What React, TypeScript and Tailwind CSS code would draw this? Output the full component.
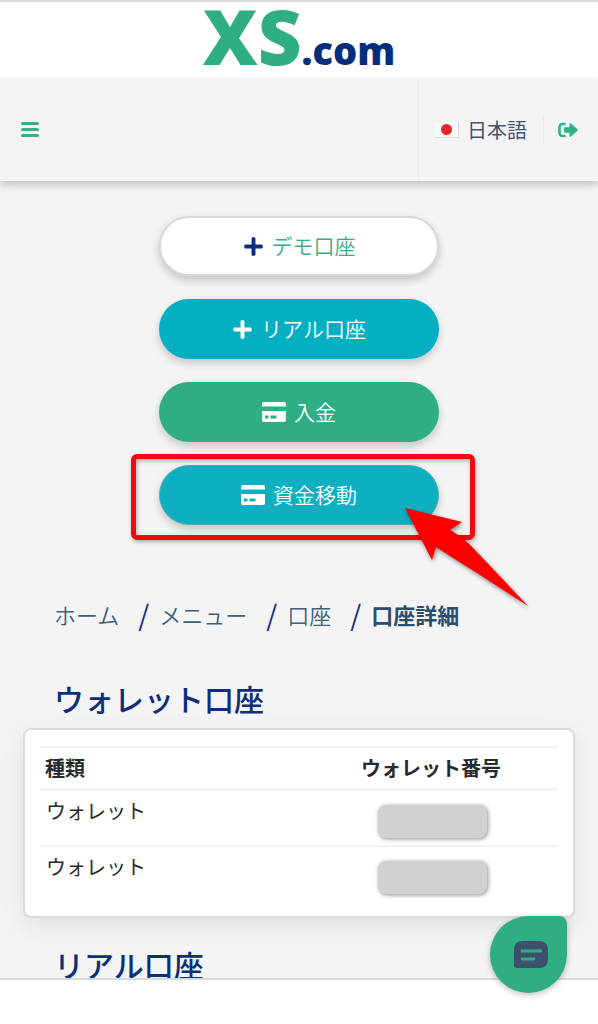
import type { ReactNode } from "react";
import { FaPlus } from "react-icons/fa";

const breadcrumbs = ["ホーム", "メニュー", "口座"];

const wallets = [
  { id: 1, type: "ウォレット" },
  { id: 2, type: "ウォレット" },
];

function CardIcon() {
  return (
    <svg viewBox="0 0 24 20" className="h-5 w-6" fill="currentColor" aria-hidden="true">
      <path d="M2 0H22A2 2 0 0 1 24 2V4.500H0V2A2 2 0 0 1 2 0Z" />
      <path
        fillRule="evenodd"
        d="M0 9H24V18A2 2 0 0 1 22 20H2A2 2 0 0 1 0 18ZM3 13.500V16.500H6.500V13.500ZM8.500 13.500V16.500H14.500V13.500Z"
      />
    </svg>
  );
}

function LogoutIcon() {
  return (
    <svg viewBox="0 0 20 16" className="h-4 w-5 text-[#2bb38a]" aria-hidden="true">
      <path
        d="M7.500 2H4.500A3 3 0 0 0 1.500 5V11A3 3 0 0 0 4.500 14H7.500"
        fill="none"
        stroke="currentColor"
        strokeWidth="2.6"
      />
      <path
        d="M6 6.200Q6 5.200 7 5.200H11.500V2Q11.500 0.200 13 1.400L19.400 7.200Q20.200 8 19.400 8.800L13 14.600Q11.500 15.800 11.500 14V10.800H7Q6 10.800 6 9.800Z"
        fill="currentColor"
      />
    </svg>
  );
}

function PillButton({ className, children }: { className: string; children: ReactNode }) {
  return (
    <button
      type="button"
      className={`flex h-15 w-full items-center justify-center gap-2 rounded-full text-[21px] font-[350] shadow-[0_4px_8px_rgba(0,0,0,0.2)] ${className}`}
    >
      {children}
    </button>
  );
}

function Pointer() {
  return (
    <svg
      viewBox="0 0 123 98"
      className="pointer-events-none absolute left-[246px] top-[43px] w-[123px] overflow-visible drop-shadow-[1px_2px_2px_rgba(0,0,0,0.45)]"
      fill="#ff0000"
      aria-hidden="true"
    >
      <path d="M0 0L57 14L45 22Q58 29 70 42L123 98L72 65Q48 50 31 39L27 52Z" />
    </svg>
  );
}

export default function App() {
  return (
    <div className="min-h-screen bg-[#f4f4f4] font-['Noto_Sans_CJK_JP',sans-serif]">
      <div className="flex h-[78px] items-center justify-center border-t-2 border-[#dcdcdc] bg-white pt-[6px]">
        <a
          href="#"
          className="flex items-baseline font-['Open_Sans',sans-serif] font-extrabold"
        >
          <span className="text-[76px] leading-[76px] text-[#2fae84]">XS</span>
          <span className="text-[38px] leading-[76px] text-[#042e7d]">.com</span>
        </a>
      </div>

      <header className="relative flex h-[103px] items-center justify-between shadow-[0_4px_8px_rgba(0,0,0,0.2)]">
        <button type="button" aria-label="メニュー" className="ml-[21px] flex w-[18px] flex-col gap-[3px]">
          <span className="h-[3px] rounded-sm bg-[#3aae8c]" />
          <span className="h-[3px] rounded-sm bg-[#3aae8c]" />
          <span className="h-[3px] rounded-sm bg-[#3aae8c]" />
        </button>
        <div className="flex h-full items-center border-l border-[#ebebeb] pl-4">
          <button type="button" className="flex items-center gap-2 text-xl text-[#44546f]">
            <span className="flex h-4 w-6 items-center justify-center border-b border-r border-[#dddddd] bg-[#f8f8f8]">
              <span className="size-[11px] rounded-full bg-[#e8232b]" />
            </span>
            日本語
          </button>
          <a
            href="#"
            aria-label="ログアウト"
            className="ml-4 flex h-7 items-center border-l border-[#ebebeb] pl-[14px] pr-5"
          >
            <LogoutIcon />
          </a>
        </div>
      </header>

      <main className="px-[23px] pt-[35px]">
        <div className="mx-auto flex w-[280px] flex-col gap-[23px]">
          <PillButton className="border-2 border-[#d8d8dc] bg-white text-[#36ad86]">
            <FaPlus className="text-[#062e80]" />
            デモ口座
          </PillButton>
          <PillButton className="bg-[#03afc1] text-white">
            <FaPlus />
            リアル口座
          </PillButton>
          <PillButton className="bg-[#2fae84] text-white">
            <CardIcon />
            入金
          </PillButton>
          <div className="relative">
            <PillButton className="border border-[#5aa9b5] bg-[#0dafc0] text-white">
              <CardIcon />
              資金移動
            </PillButton>
            <div className="pointer-events-none absolute -bottom-[15px] -left-7 -right-9 -top-[11px] rounded-md border-[5px] border-[#ee0a0e] shadow-[1px_2px_4px_rgba(0,0,0,0.3),inset_1px_2px_4px_rgba(0,0,0,0.3)]" />
            <Pointer />
          </div>
        </div>

        <nav className="mt-[73px] px-[31px]">
          <ol className="flex items-center text-[22px] leading-8 text-[#3f5f7a]">
            {breadcrumbs.map((label) => (
              <li key={label} className="flex items-center font-[350]">
                <a href="#">{label}</a>
                <span className="ml-[19px] mr-[10px] text-[28px] font-normal text-[#0d2f7f]">/</span>
              </li>
            ))}
            <li className="font-bold text-[#2c4c6e]">口座詳細</li>
          </ol>
        </nav>

        <h2 className="mt-12 px-[31px] text-[30px] font-medium leading-10 text-[#0c2f78]">
          ウォレット口座
        </h2>

        <section className="mt-[10px] rounded-lg border-2 border-[#d9d9de] bg-white px-[15px] pb-[13px] pt-4 shadow-[0_8px_24px_rgba(0,0,0,0.08)]">
          <table className="w-full text-left text-xl text-[#26292d]">
            <thead>
              <tr className="border-b-[3px] border-t-2 border-[#f2f2f2]">
                <th className="h-[42px] w-[61%] px-[5px] font-bold leading-8">種類</th>
                <th className="px-[5px] font-bold leading-8">ウォレット番号</th>
              </tr>
            </thead>
            <tbody>
              {wallets.map((wallet) => (
                <tr key={wallet.id} className="border-b-2 border-[#f2f2f2] last:border-0">
                  <td className="h-[57px] px-[6px] pt-1 align-top leading-8">{wallet.type}</td>
                  <td className="pl-[22px] pt-[14px] align-top">
                    <div className="h-[33px] w-[109px] rounded-lg bg-[#d1d1d1] shadow-[1px_1px_4px_rgba(0,0,0,0.45)]" />
                  </td>
                </tr>
              ))}
            </tbody>
          </table>
        </section>

        <h2 className="mt-[26px] px-[31px] pb-[46px] text-[30px] font-medium leading-10 text-[#0c2f78]">
          リアル口座
        </h2>
      </main>

      <div className="fixed inset-x-0 bottom-0 h-[46px] border-t-2 border-[#d9dadf] bg-white" />

      <button
        type="button"
        aria-label="チャット"
        className="fixed bottom-[31px] right-[31px] flex size-[77px] items-center justify-center rounded-[50%] rounded-tr-lg bg-[#2fae84] pl-[5px] shadow-[0_2px_6px_rgba(0,0,0,0.25)]"
      >
        <svg viewBox="0 0 34 27" className="w-[34px]" aria-hidden="true">
          <path
            d="M9 0H25Q34 0 34 9V18Q34 27 25 27H3Q0 27 0 24V9Q0 0 9 0Z"
            fill="#3a506b"
          />
          <path d="M7 10H28M7 18H21" stroke="#2fae84" strokeWidth="3" />
        </svg>
      </button>
    </div>
  );
}
